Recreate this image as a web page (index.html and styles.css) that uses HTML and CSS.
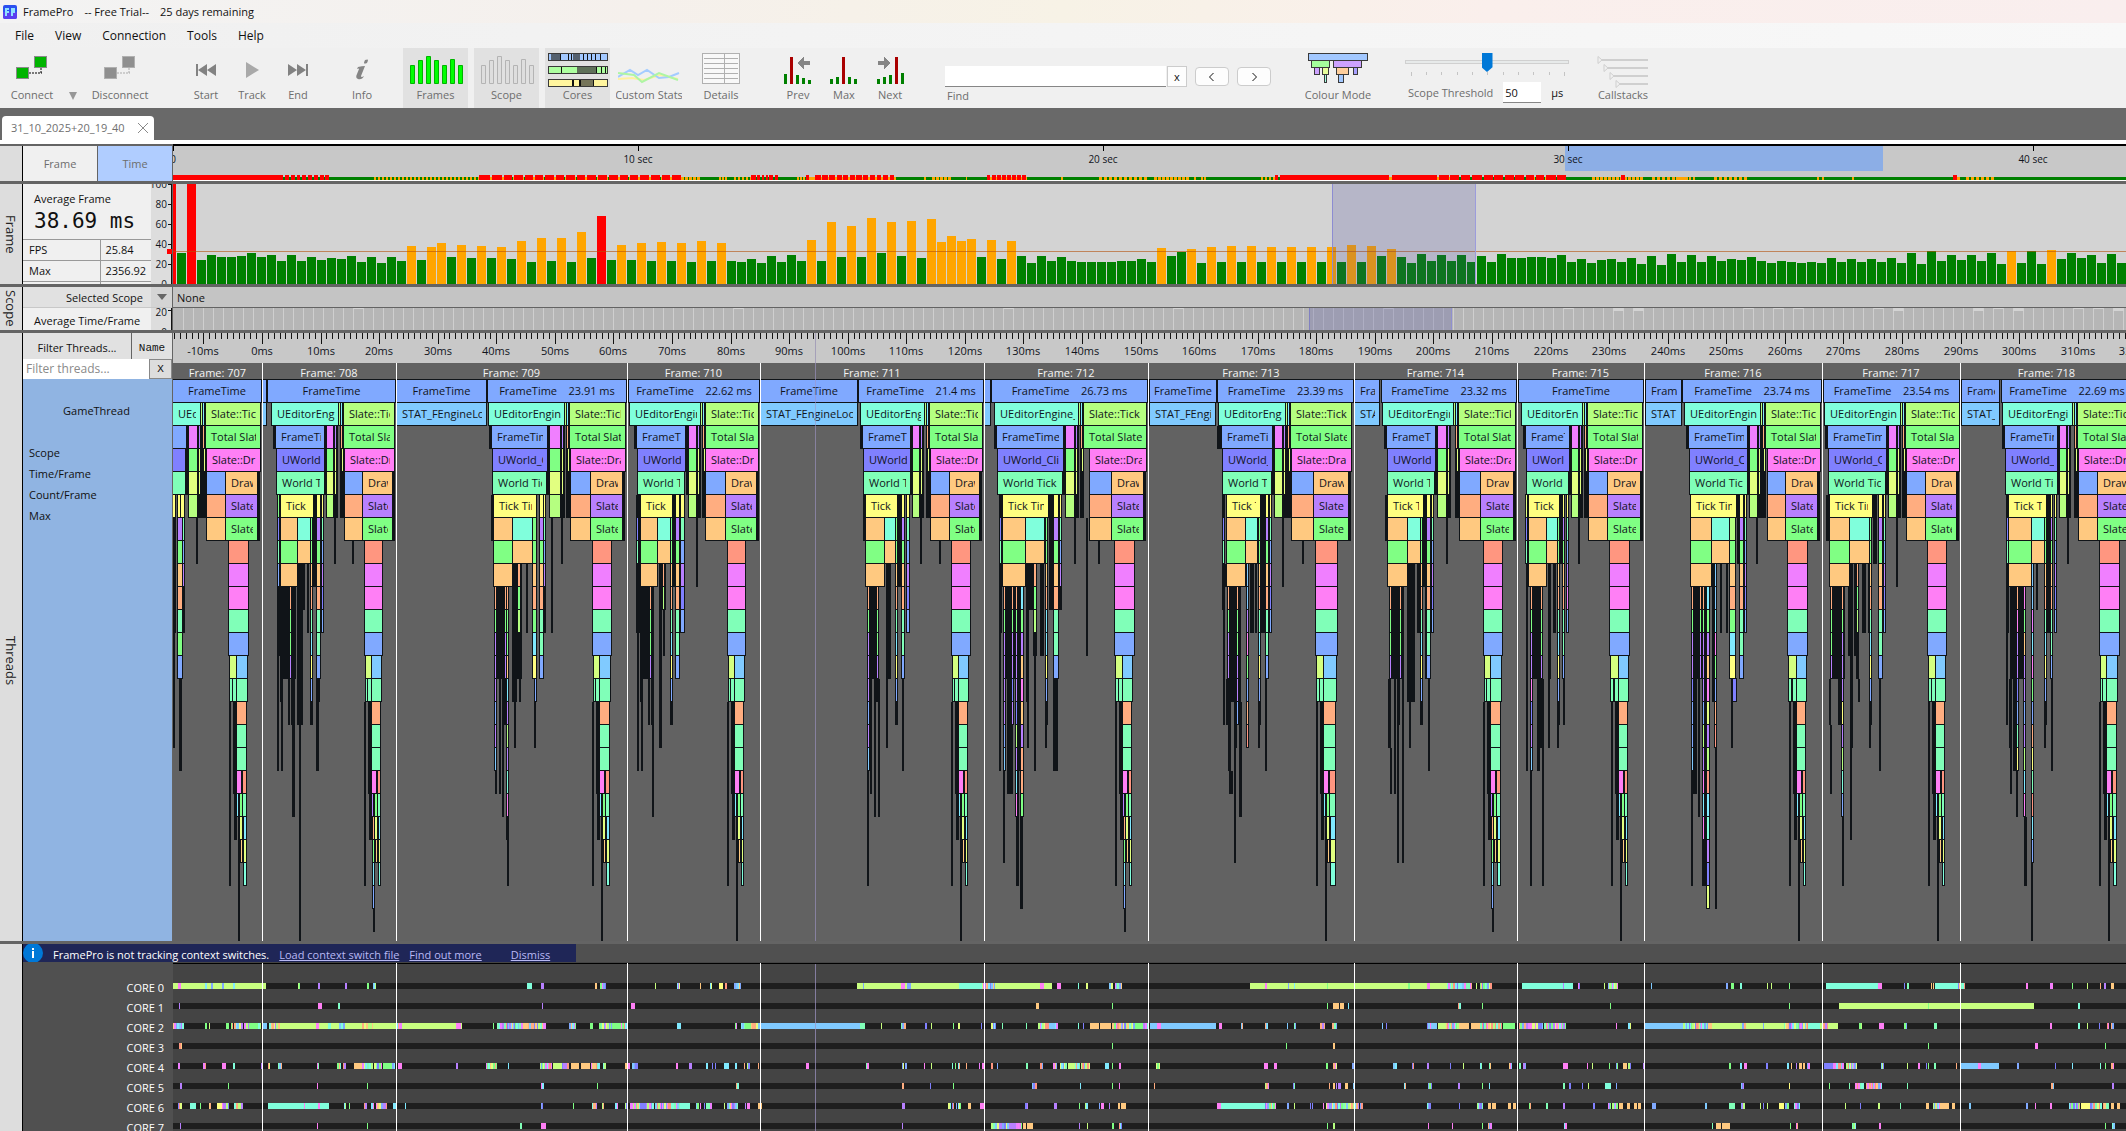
FILE: index.html
```html
<!DOCTYPE html>
<html lang="en">
<head>
<meta charset="utf-8">
<title>FramePro</title>
<link rel="stylesheet" href="styles.css">
</head>
<body>
<header class="titlebar">
  <svg class="app-icon" width="14" height="14" viewBox="0 0 14 14"><rect width="14" height="14" rx="2" fill="#2a50f0"/><path d="M0 7h14v5a2 2 0 0 1-2 2H2a2 2 0 0 1-2-2z" fill="#5a3ff0"/><path d="M2 11V3h4v2H4v1h2v2H4v3zM8 11V3h4v5h-2v3z" fill="#8fe0ff"/></svg>
  <span>FramePro</span><span>-- Free Trial--</span><span>25 days remaining</span>
</header>
<nav class="menubar">
  <button>File</button><button>View</button><button>Connection</button><button>Tools</button><button>Help</button>
</nav>
<div class="toolbar">
  <button class="tool w60"><svg width="32" height="32" viewBox="0 0 32 32"><path d="M13 17h13M25 12v6" stroke="#000" stroke-dasharray="2 1" fill="none"/><rect x=".5" y="11.500" width="12" height="11" fill="#00b400" stroke="#8a8a8a"/><rect x="18.500" y=".5" width="12" height="11" fill="#00b400" stroke="#8a8a8a"/></svg><span>Connect</span></button>
  <button class="drop" aria-label="Connect options"><svg width="10" height="10" viewBox="0 0 10 10"><path d="M1 1h8L5 9z" fill="#979797"/></svg></button>
  <button class="tool w72"><svg width="32" height="32" viewBox="0 0 32 32"><path d="M13 17h13M25 12v6" stroke="#aaa" stroke-dasharray="2 1" fill="none"/><rect x=".5" y="11.500" width="12" height="11" fill="#8f8f8f" stroke="#b0b0b0"/><rect x="18.500" y=".5" width="12" height="11" fill="#8f8f8f" stroke="#b0b0b0"/></svg><span>Disconnect</span></button>
  <button class="tool w46 gap-l"><svg width="22" height="32" viewBox="0 0 22 32"><path d="M1 8h2v12H1zM3 14l9-6v12zM12 14l9-6v12z" fill="#828282"/></svg><span>Start</span></button>
  <button class="tool w46"><svg width="22" height="32" viewBox="0 0 22 32"><path d="M5 6l13 8-13 8z" fill="#a9a9a9"/></svg><span>Track</span></button>
  <button class="tool w46"><svg width="22" height="32" viewBox="0 0 22 32"><path d="M1 8l9 6-9 6zM10 8l9 6-9 6zM19 8h2v12h-2z" fill="#828282"/></svg><span>End</span></button>
  <button class="tool w46 gap-m"><svg width="16" height="32" viewBox="0 0 16 32"><path d="M11 4q3-1 3 0t-1 3q-3 1-3 0t1-3zM4 11q4-1 7-1L7 20q0 2 3 0-2 4-6 3-3-1-1-5l2-5q0-1-2 0z" fill="#858585"/></svg><span>Info</span></button>
  <button class="tool w65 on gap-m"><svg width="54" height="32" viewBox="0 0 54 32"><g fill="#0f0" stroke="#00b400"><path d="M1.500 9.500h4v18h-4zM9.500 4.500h4v23h-4zM17.500.5h4v27h-4zM25.500 4.500h4v23h-4zM33.500 9.500h4v18h-4zM41.500 3.500h4v24h-4zM49.500 9.500h4v18h-4z"/></g></svg><span>Frames</span></button>
  <button class="tool w65 on gap-s"><svg width="54" height="32" viewBox="0 0 54 32"><g fill="#dedede" stroke="#b4b4b4"><path d="M1.500 9.500h4v18h-4zM9.500 4.500h4v23h-4zM17.500.5h4v27h-4zM25.500 4.500h4v23h-4zM33.500 9.500h4v18h-4zM41.500 3.500h4v24h-4zM49.500 9.500h4v18h-4z"/></g></svg><span>Scope</span></button>
  <button class="tool w65 on gap-s"><svg class="hi" width="60" height="34" viewBox="0 0 60 34" shape-rendering="crispEdges"><g stroke="#3a3a3a"><rect x=".5" y=".5" width="59" height="7" fill="#a2c8ff"/><rect x=".5" y="13.500" width="59" height="7" fill="#adffa0"/><rect x=".5" y="26.500" width="59" height="7" fill="#fff59e"/></g><path d="M3 1h9v6H3zM25 1h7v6h-7z" fill="#54606e"/><path d="M29 14h20v6H29z" fill="#5e7058"/><path d="M33 27h13v6H33z" fill="#76755a"/><path d="M12 1h1v6h-1zM20 1h1v6h-1zM23 1h1v6h-1zM35 1h1v6h-1zM39 1h1v6h-1zM43 1h1v6h-1zM47 1h1v6h-1zM52 1h1v6h-1zM13 14h1v6h-1zM48 14h1v6h-1zM53 14h1v6h-1zM57 14h1v6h-1zM24 27h2v6h-2zM31 27h2v6h-2zM45 27h1v6h-1z" fill="#111"/></svg><span>Cores</span></button>
  <button class="tool w66 gap-s"><svg width="62" height="32" viewBox="0 0 62 32"><g fill="none" stroke-width="2"><path d="M0 23l14-1 12 2 16-5 18 4" stroke="#fff0a0"/><path d="M0 21l12-7 8 5 9-5 12 8 10-1 10-4" stroke="#a4ccff"/><path d="M0 17l16 2 8 7 17-9 19 7" stroke="#aef5a4"/></g></svg><span>Custom Stats</span></button>
  <button class="tool w66 gap-s"><svg class="hi" width="38" height="32" viewBox="0 0 38 32" shape-rendering="crispEdges"><rect x=".5" y=".5" width="37" height="30" fill="#f8f8f8" stroke="#b0b0b0"/><path d="M22.500 1v30M2 5.500h34M2 10.500h34M2 15.500h34M2 20.500h34M2 25.500h34" stroke="#b0b0b0" fill="none"/></svg><span>Details</span></button>
  <button class="tool w46 gap-n"><svg width="30" height="32" viewBox="0 0 30 32" shape-rendering="crispEdges"><path d="M1 18h3v10H1zM13 19h3v9h-3zM19 22h3v6h-3zM25 24h3v4h-3z" fill="green"/><path d="M7 1h3v27H7z" fill="#a00"/><path d="M14 7l7-6v4h6v4h-6v4z" fill="#858585"/></svg><span>Prev</span></button>
  <button class="tool w46"><svg width="30" height="32" viewBox="0 0 30 32" shape-rendering="crispEdges"><path d="M1 23h3v5H1zM7 21h3v7H7zM19 21h3v7h-3zM25 23h3v5h-3z" fill="green"/><path d="M13 1h3v27h-3z" fill="#a00"/></svg><span>Max</span></button>
  <button class="tool w46"><svg width="30" height="32" viewBox="0 0 30 32" shape-rendering="crispEdges"><path d="M2 23h3v5H2zM8 21h3v7H8zM14 19h3v9h-3zM26 17h3v11h-3z" fill="green"/><path d="M20 1h3v27h-3z" fill="#a00"/><path d="M16 7L9 1v4H3v4h6v4z" fill="#858585"/></svg><span>Next</span></button>
  <div class="find">
    <div class="find-row"><input id="find" type="text"><button class="clear">x</button></div>
    <label for="find">Find</label>
  </div>
  <button class="step" aria-label="Previous match"><svg width="8" height="10" viewBox="0 0 8 10"><path d="M5.500 1l-4 4 4 4" fill="none" stroke="#111"/></svg></button>
  <button class="step" aria-label="Next match"><svg width="8" height="10" viewBox="0 0 8 10"><path d="M2.500 1l4 4-4 4" fill="none" stroke="#111"/></svg></button>
  <button class="tool w66 gap-x"><svg class="hi" width="60" height="32" viewBox="0 0 60 32" shape-rendering="crispEdges"><g stroke="#3a3a3a"><rect x=".5" y=".5" width="59" height="7" fill="#a2c8ff"/><rect x="3.500" y="7.500" width="18" height="7" fill="#a5ff9c"/><rect x="25.500" y="7.500" width="28" height="7" fill="#cda2ff"/><rect x="6.500" y="14.500" width="5" height="7" fill="#cda2ff"/><rect x="14.500" y="14.500" width="6" height="7" fill="#e8ff9c"/><rect x="28.500" y="14.500" width="12" height="7" fill="#ffcf9c"/><rect x="45.500" y="14.500" width="4" height="7" fill="#a8a0ff"/><rect x="16.500" y="21.500" width="2" height="8" fill="#a2ffe0"/><rect x="30.500" y="21.500" width="5" height="8" fill="#a2c8ff"/></g></svg><span>Colour Mode</span></button>
  <div class="threshold">
    <input class="range" type="range" min="0" max="100" value="50" aria-label="Scope threshold slider">
    <svg class="ticks" width="156" height="4" shape-rendering="crispEdges"><path d="M1 0v4M16 0v3M31 0v3M47 0v3M62 0v3M77 0v3M93 0v3M108 0v3M123 0v3M139 0v3M154 0v4" stroke="#c4c4c4"/></svg>
    <div class="th-row"><label for="th">Scope Threshold</label><input id="th" type="text" value="50"><span>µs</span></div>
  </div>
  <button class="tool w66 gap-n"><svg width="52" height="32" viewBox="0 0 52 32"><g fill="none" stroke="#cfcfcf"><path d="M1 .5L5 4 1 7.500zM7 8.500l4 3.500-4 3.500zM13 16.500l4 3.500-4 3.500zM19 24.500l4 3.500-4 3.500z"/><path d="M5 4h46M11 12h40M17 20h34M23 28h28" stroke-width="2"/></g></svg><span>Callstacks</span></button>
</div>
<div class="tabs"><div class="tab"><span>31_10_2025+20_19_40</span><button aria-label="Close tab"><svg width="10" height="10" viewBox="0 0 10 10"><path d="M0 0l10 10M10 0L0 10" stroke="#8a8a8a"/></svg></button></div></div>
<main class="panes">
  <section class="pane overview">
    <div class="rail"></div>
    <div class="side modes"><button>Frame</button><button class="sel">Time</button></div>
    <svg class="plot" id="overview" height="35"></svg>
  </section>
  <section class="pane frames">
    <div class="rail"><span>Frame</span></div>
    <div class="side split">
      <div class="stats">
        <p class="avg">Average Frame</p>
        <p class="big">38.69 ms</p>
        <table><tr><th>FPS</th><td>25.84</td></tr><tr><th>Max</th><td>2356.92</td></tr><tr><th></th><td></td></tr></table>
      </div>
      <svg class="scale" id="frame-scale" width="21" height="100"></svg>
    </div>
    <svg class="plot" id="frames" height="100"></svg>
  </section>
  <section class="pane scope">
    <div class="rail"><span>Scope</span></div>
    <div class="side">
      <div class="scope-sel"><span>Selected Scope</span><button aria-label="Choose scope"><svg width="10" height="6" viewBox="0 0 10 6"><path d="M0 0h10L5 6z" fill="#666"/></svg></button></div>
      <div class="scope-avg"><span>Average Time/Frame</span><svg class="scale" id="scope-scale" width="21" height="22"></svg></div>
    </div>
    <div class="scope-plot"><div class="scope-name">None</div><svg class="plot" id="scope" height="22"></svg></div>
  </section>
  <section class="pane threads">
    <div class="rail"><span>Threads</span></div>
    <div class="side thread-side">
      <div class="filter-head"><button>Filter Threads...</button><button class="name">Name</button></div>
      <div class="filter-row"><input type="text" placeholder="Filter threads..." aria-label="Filter threads"><button>X</button></div>
      <div class="thread-info"><h2>GameThread</h2><p>Scope</p><p>Time/Frame</p><p>Count/Frame</p><p>Max</p></div>
    </div>
    <div class="thread-plot"><svg class="plot" id="ruler" height="30"></svg><svg class="plot" id="flame" height="578"></svg></div>
  </section>
  <section class="pane cores">
    <div class="rail"></div>
    <div class="core-main">
      <div class="notice"><svg width="20" height="18" viewBox="0 0 20 18"><circle cx="10" cy="9" r="10" fill="#0078d7"/><path d="M9 4h2v2H9zM9 7h2v7H9z" fill="#fff"/></svg><span>FramePro is not tracking context switches.</span><a href="#load">Load context switch file</a><a href="#more">Find out more</a><a class="dismiss" href="#dismiss">Dismiss</a></div>
      <div class="core-body">
        <ul class="core-names"><li>CORE 0</li><li>CORE 1</li><li>CORE 2</li><li>CORE 3</li><li>CORE 4</li><li>CORE 5</li><li>CORE 6</li><li>CORE 7</li></ul>
        <svg class="plot" id="cores" height="180"></svg>
      </div>
    </div>
  </section>
</main>
<script src="app.js"></script>
</body>
</html>
```
FILE: styles.css
```css
* { box-sizing: border-box; }
body {
  margin: 0;
  height: 100vh;
  overflow: hidden;
  display: flex;
  flex-direction: column;
  font: 11px/16px "Open Sans", "Noto Sans", sans-serif;
  color: #111;
  background: #f0f0f0;
}
button { font: inherit; color: inherit; border: 0; padding: 0; background: none; }
p, h2, ul { margin: 0; padding: 0; font: inherit; list-style: none; }
svg { display: block; flex: none; }
svg text { font: 11px "Open Sans", "Noto Sans", sans-serif; fill: #10141c; }

.titlebar {
  display: flex;
  align-items: center;
  gap: 11px;
  height: 23px;
  padding-left: 3px;
  background: linear-gradient(90deg, #f3f3f3, #f5f0ec 30%, #f7f2e6 50%, #faefec 70%, #f9eeee);
}
.app-icon { margin-right: -5px; }
.menubar { display: flex; gap: 21px; height: 25px; padding-left: 15px; font-size: 12px; background: linear-gradient(90deg, #f0f0f0, #f8f8f8); }

.toolbar { display: flex; height: 60px; padding-left: 2px; color: #6d6d6d; }
.tool { display: flex; flex-direction: column; align-items: center; justify-content: space-between; height: 60px; padding: 5px 0 7px; white-space: nowrap; overflow: hidden; flex: none; }
.tool svg { margin-top: 3px; }
.tool svg.hi { margin-top: 0; }
.tool.on { background: #e1e1e1; }
.tool span { line-height: 13px; }
.w46 { width: 46px; } .w60 { width: 60px; } .w65 { width: 65px; } .w66 { width: 66px; } .w72 { width: 72px; }
.gap-s { margin-left: 6px; } .gap-m { margin-left: 18px; } .gap-n { margin-left: 21px; } .gap-l { margin-left: 27px; } .gap-x { margin-left: 34px; }
.drop { width: 22px; padding: 36px 6px 0; }
.find { width: 242px; margin-left: 32px; padding-top: 18px; }
.find-row { display: flex; gap: 1px; height: 21px; }
.find-row input { width: 221px; border: 0; border-bottom: 1px solid #868686; background: #fff; }
.clear { width: 20px; border: 1px solid #ccc; background: #fdfdfd; color: #111; }
.find label { display: block; padding: 1px 2px; }
.step { display: grid; place-items: center; width: 34px; height: 19px; margin: 19px 0 0 8px; border: 1px solid #ccc; border-radius: 4px; background: #fdfdfd; flex: none; }
.threshold { width: 164px; margin-left: 34px; padding-top: 4px; }
.range { display: block; width: 164px; height: 20px; margin: 0; appearance: none; background: none; }
.range::-webkit-slider-runnable-track { height: 4px; border: 1px solid #d0d0d0; background: #e7eaea; }
.range::-webkit-slider-thumb { appearance: none; width: 11px; height: 19px; margin-top: -8px; background: #0078d7; clip-path: polygon(0 0, 100% 0, 100% 75%, 50% 100%, 0 75%); }
.ticks { margin-left: 5px; }
.th-row { display: flex; align-items: center; gap: 10px; padding: 6px 0 0 3px; white-space: nowrap; }
.th-row input { width: 38px; height: 21px; padding: 0 2px; border: 0; border-bottom: 1px solid #868686; background: #fff; font: inherit; color: #111; }
.th-row span { color: #111; }

.tabs { height: 36px; padding: 8px 2px 0; background: #696969; border-bottom: 4px solid #fff; }
.tab { display: flex; align-items: center; justify-content: space-between; width: 152px; height: 24px; padding: 0 6px 0 9px; background: #fff; border-radius: 4px 4px 0 0; color: #707070; }

.panes { flex: 1; min-height: 0; display: flex; flex-direction: column; gap: 3px; background: #646464; padding-top: 2px; }
.pane { display: flex; min-width: 0; }
.rail { width: 22px; flex: none; background: #ddd; display: grid; place-items: center; }
.rail span { writing-mode: vertical-rl; font-size: 13px; color: #222; }
.threads .rail { padding-top: 48px; }
.side { width: 151px; flex: none; border-left: 1px solid #000; border-right: 1px solid #646464; background: #f0f0f0; }
.plot { flex: 1; min-width: 0; width: 100%; overflow: hidden; shape-rendering: crispEdges; }
.overview .plot { margin-top: -2px; height: 37px; }
.modes { display: flex; color: #6d6d6d; }
.modes button { flex: 1; }
.modes .sel { background: #b0cdff; border-left: 1px solid #646464; }

.split { display: flex; height: 100px; }
.stats { flex: 1; overflow: hidden; }
.scale { background: #ddd; }
svg .small { font-size: 10px; }
.avg { padding: 7px 0 0 11px; }
.big { padding: 2px 0 5px 11px; font: 21px/25px "DejaVu Sans Mono", monospace; }
.stats table { width: 100%; border-collapse: collapse; }
.stats th, .stats td { height: 21px; padding: 0 6px; border-top: 1px solid #999; font-weight: 400; text-align: left; }
.stats td { width: 51px; border-left: 1px solid #999; padding: 0 0 0 5px; }

.scope-sel { display: flex; height: 21px; background: #e1e1e1; border-bottom: 1px solid #c8c8c8; }
.scope-sel span { flex: 1; text-align: right; padding: 3px 8px 0 0; }
.scope-sel button { width: 21px; display: grid; place-items: center; background: #d4d4d4; }
.scope-avg { display: flex; height: 22px; overflow: hidden; }
.scope-avg span { flex: 1; padding: 5px 0 0 11px; white-space: nowrap; }
.scope-plot, .thread-plot { flex: 1; min-width: 0; }
.scope-name { height: 21px; padding: 3px 4px 0; background: #c4c4c4; border-bottom: 1px solid #646464; }

.thread-side { display: flex; flex-direction: column; background: #90b4e2; }
.filter-head { display: flex; height: 26px; background: #e1e1e1; }
.filter-head button { flex: 1; padding-top: 4px; }
.filter-head .name { flex: none; width: 41px; border-left: 1px solid #646464; font: 11px "Liberation Mono", monospace; }
.filter-row { display: flex; height: 20px; }
.filter-row input { flex: 1; min-width: 0; border: 0; padding: 0 3px; font: inherit; font-size: 12px; background: #fff; }
.filter-row input::placeholder { color: #8a8a8a; }
.filter-row button { width: 23px; border: 1px solid #888; background: #ddd; font: 11px "Liberation Mono", monospace; }
.thread-info { padding: 24px 8px 0 6px; line-height: 21px; }
.thread-info h2 { text-align: center; line-height: 16px; margin-bottom: 23px; }

.cores { flex: 1; min-height: 0; overflow: hidden; }
.core-main { flex: 1; min-width: 0; border-left: 1px solid #000; background: #505050; color: #fff; }
.notice { display: flex; align-items: center; width: 553px; height: 18px; background: #1f2657; white-space: nowrap; }
.notice span { margin: 4px 10px 0 10px; }
.notice a { color: #b9b9f5; margin: 4px 10px 0 0; }
.notice .dismiss { margin-left: 19px; }
.core-body { display: flex; }
.core-names { width: 150px; flex: none; padding: 16px 9px 0 0; text-align: right; line-height: 20px; }
#cores { background: #444; }
```
FILE: app.js
```js
const C = { r: '#ff9680', a: '#ffad80', o: '#ffc980', y: '#ffff80', Y: '#e2ff80', d: '#d4ff80', l: '#b5ff80', g: '#80ff84',
  t: '#80ffb8', c: '#80ffdc', i: '#80eaff', s: '#80caff', b: '#80a9ff', v: '#8080ff', p: '#b880ff', m: '#f07fff', k: '#ff7ff5' };
const DARK = '#101418';
const LEFT = 173;
const rect = (x, y, w, h, f) => `<rect x="${x}" y="${y}" width="${w}" height="${h}" fill="${f}"/>`;
const text = (x, y, s, extra = '') => `<text x="${x}" y="${y}" ${extra}>${s}</text>`;
const mid = 'text-anchor="middle"';
const put = (id, s, shift = LEFT) => { document.getElementById(id).innerHTML = `<g transform="translate(${-shift},0)">${s}</g>`; };
const span = s => s.trim().split(/\s+/).map(t => {
  const m = t.match(/^([A-Za-z]?)(\d+)(?:-(\d+))?$/);
  return { c: m[1], x: +m[2], e: m[3] ? +m[3] : +m[2] + 2 };
});
const FRAME_X = [262, 396, 627, 760, 984, 1148, 1354, 1517, 1644, 1822, 1960];

/* Session overview */
{
  let s = rect(LEFT, 0, 4000, 35, '#c8c8c8') + rect(LEFT, 0, 4000, 2, '#000') + rect(1565, 2, 318, 25, '#8caee6');
  s += rect(LEFT, 33, 4000, 3, 'green') + rect(LEFT, 36, 4000, 1, '#fff');
  const dash = (a, b, p, w, c, y, h) => { for (let x = a; x < b; x += p) s += rect(x, y, w, h, c); };
  [[374, 479, 4, 2], [485, 700, 4, 3], [719, 726, 3, 2], [734, 751, 4, 2], [797, 804, 3, 2], [808, 896, 4, 4], [924, 926, 4, 2], [932, 952, 4, 3], [966, 967, 4, 1], [990, 1026, 5, 2],
   [1061, 1063, 4, 2], [1099, 1145, 5, 3], [1154, 1188, 4, 3], [1194, 1196, 4, 2], [1201, 1207, 3, 2], [1261, 1274, 4, 2], [1389, 1392, 4, 3], [1437, 1560, 12, 2], [1592, 1644, 4, 3],
   [1652, 1675, 5, 3], [1676, 1688, 4, 4], [1689, 1696, 4, 2], [1714, 1745, 5, 3], [1817, 1819, 4, 2], [1822, 1824, 4, 2], [1852, 1854, 4, 2], [1957, 1961, 4, 3], [1966, 1995, 5, 3]]
    .forEach(([a, b, p, w]) => dash(a, b, p, w, 'orange', 33, 3));
  span('173-283 285-289 291-295 297-300 302-306 308-312 314-318 320-324 325-329 479-490 492-502 504-512 514-523 525-533 535-543 545-554 556-564 566-575 577-585 587-596 598-607 609-618 620-628 630-638 640-649 651-660 662-670 672-681 751-756 757-760 762-764 766-768 769-773 775-778 806-809 815-821 822-828 829-835 837-842 843-848 850-855 856-862 863-868 870-875 877-881 883-888 890-894 987-990 992-996 997-1001 1002-1006 1007-1011 1012-1016 1017-1021 1022-1026 1275-1278 1280-1389 1392-1437 1439-1449 1450-1459 1461-1470 1472-1482 1484-1493 1494-1503 1505-1514 1515-1524 1526-1534 1536-1544 1546-1556 1557-1566 1621-1625 1953-1957')
    .forEach(q => { s += rect(q.x, 31, q.e - q.x, 5, 'red'); });
  [[173, '0'], [638, '10 sec'], [1103, '20 sec'], [1568, '30 sec'], [2033, '40 sec']].forEach(([x, l]) => { s += rect(x, 2, 1, 5, '#000') + text(x, 19, l, mid + ' class="small"'); });
  put('overview', s);
}

/* Frame graph: heights in ms, o = over budget, r = spike */
{
  const H = '31 r100 24 29 27 27 28 31 27 29 23 29 23 27 24 26 25 28 22 27 21 27 23 o38 24 o37 o41 27 o39 26 o38 26 o37 25 o43 22 o46 23 o46 22 o52 26 r68 24 o39 24 o41 23 o42 23 o41 22 o43 23 o41 23 22 25 21 28 22 29 23 o44 23 o62 27 o58 27 o66 31 o62 28 o63 26 o65 o42 o48 o43 o45 27 o44 25 o43 28 21 28 23 27 23 22 22 22 22 23 23 25 22 o36 28 32 o35 21 o37 22 o38 22 o38 22 o37 22 o37 22 o37 22 o37 22 o39 22 o38 28 o35 27 21 30 23 29 23 29 22 28 22 30 26 26 27 27 26 29 22 25 21 24 25 22 26 20 28 19 30 22 29 22 28 23 25 24 27 23 21 23 22 21 22 21 26 22 25 22 25 22 26 21 31 20 33 23 29 24 29 23 31 20 o33 21 33 20 o34 25 31 26 29 21 30 21'.split(' ');
  let s = rect(LEFT, 0, 4000, 100, '#d3d3d3') + rect(173, 0, 3, 100, 'red');
  H.forEach((h, k) => {
    const n = +h.replace(/\D/g, '');
    s += rect(177 + 10 * k, 100 - n, 9, n, h[0] === 'o' ? 'orange' : h[0] === 'r' ? 'red' : 'green');
  });
  s += rect(LEFT, 67, 4000, 1, 'rgba(180,80,10,.6)') + rect(1332, 0, 144, 100, 'rgba(70,70,160,.2)') + rect(1332, 0, 1, 100, '#8c8cd2') + rect(1475, 0, 1, 100, '#9c9cdc');
  put('frames', s);
  let a = rect(20, 0, 1, 100, '#111') + rect(16, 65, 5, 5, 'red');
  [100, 80, 60, 40, 20, 0].forEach(v => { a += rect(17, 100 - v, 3, 1, '#111') + text(16, 104 - v, v, 'text-anchor="end" class="small"'); });
  put('frame-scale', a, 0);
}

/* Scope graph */
{
  let s = rect(LEFT, 0, 4000, 22, '#b6b6b6');
  for (let x = 183; x < 2400; x += 10) s += rect(x, 0, 1, 22, '#cfcfcf');
  [353, 733, 1003, 1173, 1383, 1563, 1743, 1773, 1793, 1873, 1993, 2073, 2093].forEach(x => { s += rect(x, 0, 11, 1, '#d3d3d3'); });
  [1613, 1633, 1893, 1973, 2013, 2113].forEach(x => { s += rect(x, 0, 11, 3, '#d3d3d3'); });
  s += rect(1309, 0, 143, 22, 'rgba(100,100,170,.3)') + rect(1309, 0, 1, 22, '#8080c0') + rect(1451, 0, 1, 22, '#9090d0');
  put('scope', s);
  put('scope-scale', rect(20, 0, 1, 22, '#111') + rect(17, 2, 3, 1, '#111') + text(16, 8, '20', 'text-anchor="end" class="small"') + text(16, 28, '0', 'text-anchor="end" class="small"'), 0);
}

/* Time ruler */
{
  let s = rect(LEFT, 0, 4000, 30, '#c8c8c8');
  for (let t = -15; t < 400; t++) {
    const x = Math.round(262 + 5.857 * t);
    s += rect(x, 0, 1, t % 10 ? 6 : 11, '#111');
    if (t % 10 === 0) s += text(x, 22, t + 'ms', mid);
  }
  put('ruler', s + rect(815, 0, 1, 30, 'rgba(130,120,170,.5)'));
}

/* Call tree of the game thread */
const top0 = 17;
const rowY = r => top0 + 23 * r;
const pen = document.createElement('canvas').getContext('2d');
pen.font = '11px "Open Sans"';
/* keep only the characters that start inside the bar */
const fit = (s, w) => { while (s.length > 1 && pen.measureText(s.slice(0, -1)).width > w - 1) s = s.slice(0, -1); return s; };
const label = (x, r, w, s, center) => w < 14 ? '' : `<svg x="${x + 4}" y="${rowY(r)}" width="${w - 8}" height="22">${center ? text((w - 8) / 2, 15, s, mid) : text(1, 15, fit(s, w - 9))}</svg>`;
const cell = (x, r, w, c, s, center) => rect(x - 1, rowY(r) - 1, w + 2, 24, DARK) + rect(x, rowY(r), w, 22, C[c]) + (s ? label(x, r, w, s, center) : '');

/* head: [x, end, time]; stat: bars of the idle call; g: editor tick, frame, tick, split, ends; m: middle; s: slate; st: draw stack
   dark: x,width,first row,end row; thin: x,width,first row,colours */
const FR = [
  { n: 707, head: [[173, 261]], g: null, m: [189, 8], s: [206, 260, 207, 226, 257], st: [229, 19, 237, 10],
    dark: '173,3,5,11 177,8,5,11 177,4,11,13 179,3,13,17 173,2,11,16 196,2,6,8', thin: '178,4,6,pgoatgb 173,2,5,y 178,2,5,y 181,3,5,y 183,1,6,tbp' },
  { n: 708, head: [[263, 266], [268, 395]], stat: [263, 266], g: [272, 339, 276, 325, 281, 313, 298, 310], m: [327, 6], s: [344, 394, 345, 363, 392], st: [365, 17, 372, 9], deep: 1,
    dark: '277,3,5,12 277,2,12,17 280,16,9,13 280,3,13,14 281,2,14,17 288,2,13,15 291,4,13,15 292,3,15,19 297,6,8,15 299,2,15,25 303,2,8,10 307,2,8,11 310,3,5,15 313,3,5,9 316,5,5,13 316,4,13,14 316,3,14,17 321,3,5,11 334,2,6,8 352,2,7,8',
    thin: '278,1,5,gvtb 290,1,9,aggp 311,1,5,vggoatiyb 317,3,5,ypgoattb 322,1,5,ytbpvb' },
  { n: 709, head: [[397, 486], [488, 626, '23.91']], stat: [397, 486], g: [489, 566, 492, 547, 494, 536, 513, 532], m: [550, 10], s: [570, 625, 571, 591, 622], st: [593, 18, 600, 10],
    dark: '491,2,5,7 494,14,9,13 494,3,13,17 495,2,17,18 499,2,13,18 502,2,13,19 503,3,13,15 506,3,9,20 507,2,20,22 512,5,8,14 514,2,14,16 517,5,8,13 519,2,13,14 526,2,8,11 532,5,5,13 534,2,13,16 539,4,5,13 543,3,5,11 551,2,6,11 561,2,6,8',
    thin: '495,1,9,agpppbps 505,1,9,agpp 507,1,9,aggoiplpck 518,2,8,agl 533,3,6,ggoagiy 535,1,13,b 540,3,5,ypgoattb 544,1,5,ytbp' },
  { n: 710, head: [[629, 759, '22.62']], g: [630, 701, 637, 685, 641, 672, 658, 670], m: [689, 7], s: [706, 758, 706, 726, 756], st: [728, 17, 735, 9],
    dark: '634,3,2,3 636,4,5,11 637,2,11,17 640,14,9,13 640,2,13,14 641,2,13,17 648,2,13,15 651,3,13,15 652,2,15,19 659,3,8,16 662,4,8,10 663,2,10,12 670,3,5,15 673,3,5,9 675,5,5,13 679,6,5,11 696,2,6,9',
    thin: '637,1,6,vt 650,1,9,aggp 663,1,8,al 671,1,5,vggoatiyb 676,3,5,ypgoattb 681,3,5,ytbpvb' },
  { n: 711, head: [[761, 857], [859, 983, '21.4']], stat: [761, 857], g: [861, 925, 863, 911, 866, 897, 885, 895], m: [913, 6], s: [930, 982, 931, 950, 979], st: [952, 18, 959, 9],
    dark: '863,2,5,7 867,12,9,13 867,3,13,17 867,2,17,22 870,2,13,18 874,2,13,19 876,3,13,14 878,2,13,19 886,3,8,13 886,2,13,16 889,2,8,13 895,3,5,15 898,3,5,9 901,4,5,13 902,2,13,17 906,4,5,11 920,2,6,8 939,2,6,8',
    thin: '868,1,9,agpppbps 877,1,9,aggp 896,1,5,vggoatiyb 902,2,5,ypgoattb 907,2,5,ytbpvb' },
  { n: 712, head: [[985, 990], [992, 1147, '26.73']], stat: [985, 990], g: [995, 1079, 997, 1063, 1003, 1048, 1026, 1044], m: [1066, 8], s: [1084, 1146, 1090, 1112, 1143], st: [1115, 19, 1123, 9], deep: 1,
    dark: '999,3,5,11 999,2,11,17 1003,19,9,13 1003,3,13,17 1003,2,17,21 1007,3,13,18 1010,3,13,18 1015,4,13,19 1016,3,19,22 1019,4,13,17 1020,3,17,23 1026,3,8,14 1027,2,14,16 1029,6,8,10 1033,4,8,12 1034,2,12,17 1040,4,8,12 1045,3,5,15 1045,2,15,16 1049,4,5,10 1053,6,5,13 1053,5,13,17 1059,3,5,10 1074,2,6,8 1086,2,6,12 1098,2,6,8',
    thin: '1000,1,6,vt 1004,1,9,agppppbs 1012,1,9,agppvp 1016,1,9,agpppvlpik 1021,2,9,igpokopaag 1034,2,8,agl 1046,1,5,vggoaiiyb 1054,4,5,ypgoattb 1060,1,5,ytbp' },
  { n: 713, head: [[1150, 1216], [1218, 1353, '23.39']], stat: [1150, 1215], g: [1219, 1286, 1222, 1272, 1227, 1260, 1246, 1257], m: [1275, 7], s: [1291, 1351, 1292, 1314, 1348], st: [1316, 21, 1324, 12],
    dark: '1217,3,2,3 1222,3,5,10 1222,7,8,9 1223,2,10,15 1228,13,9,14 1226,3,13,15 1228,3,14,17 1229,4,17,18 1234,3,14,16 1234,2,16,21 1239,3,14,19 1246,3,8,16 1250,4,8,11 1255,2,8,11 1258,3,5,15 1258,2,15,16 1261,4,5,11 1265,4,5,13 1265,2,13,17 1269,3,5,11 1282,2,6,9 1302,2,6,8',
    thin: '1223,1,6,vt 1228,1,9,agpp 1237,1,9,aggppb 1247,1,8,sspkgbar 1259,1,5,vggoatiyb 1266,2,5,ypgoattb 1270,1,5,ytbpvb' },
  { n: 714, head: [[1355, 1379], [1382, 1516, '23.32']], stat: [1355, 1379], g: [1383, 1454, 1387, 1435, 1388, 1423, 1408, 1420], m: [1438, 8], s: [1459, 1515, 1460, 1481, 1513], st: [1484, 18, 1491, 10], deep: 1,
    dark: '1385,2,5,7 1389,15,9,13 1388,3,13,16 1390,2,16,18 1394,2,13,18 1397,3,13,15 1397,2,15,21 1402,2,13,21 1407,6,8,14 1409,2,14,16 1413,2,8,14 1417,3,8,11 1420,3,5,15 1423,4,5,9 1425,5,5,13 1428,2,13,17 1431,3,5,11 1446,2,6,8',
    thin: '1390,1,9,aggp 1400,1,9,aggp 1421,1,5,vggoatiyb 1427,3,5,ypgoattb 1432,1,5,ytbpvb' },
  { n: 715, head: [[1519, 1643]], g: [1522, 1583, 1526, 1569, 1529, 1559, 1547, 1557], m: [1572, 6], s: [1588, 1642, 1589, 1608, 1640], st: [1610, 19, 1619, 9],
    dark: '1525,3,5,8 1526,2,8,17 1531,12,9,13 1530,3,13,17 1530,2,17,22 1537,3,13,17 1539,3,13,16 1542,2,13,22 1548,3,8,13 1548,2,13,16 1553,3,8,11 1557,3,5,15 1557,2,15,16 1560,3,5,8 1562,3,5,13 1563,2,13,15 1566,3,5,11 1578,2,6,8',
    thin: '1526,1,5,Yvt 1531,1,9,agppkvps 1541,1,9,aggp 1558,1,5,vggoatiyb 1563,1,5,ypgoattb 1567,1,5,ytbpmb' },
  { n: 716, head: [[1646, 1681], [1683, 1821, '23.74']], stat: [1646, 1681], g: [1685, 1761, 1689, 1748, 1691, 1736, 1712, 1729], m: [1750, 7], s: [1766, 1820, 1768, 1786, 1817], st: [1788, 19, 1797, 9],
    dark: '1692,17,9,13 1691,3,13,18 1691,2,18,22 1694,3,13,18 1698,2,13,19 1702,4,13,22 1706,4,13,23 1712,3,8,14 1714,3,8,16 1715,2,16,23 1720,2,8,11 1726,2,8,11 1729,7,5,13 1732,5,13,14 1731,2,13,16 1737,3,5,8 1739,5,5,13 1744,3,5,11 1756,2,6,8',
    thin: '1692,1,9,agppvbbs 1700,1,9,agpp 1703,1,9,agpppblpkik 1707,2,9,igpokYplricpvY 1715,1,8,ssikgbar 1730,5,6,lgoagiy 1733,3,13,v 1740,3,5,ypgoattb 1745,1,5,ytbpvb' },
  { n: 717, head: [[1824, 1959, '23.54']], g: [1825, 1901, 1828, 1886, 1830, 1872, 1850, 1869], m: [1889, 7], s: [1906, 1959, 1907, 1926, 1956], st: [1928, 18, 1936, 9],
    dark: '1826,3,5,7 1830,15,9,13 1829,2,13,15 1830,2,15,18 1841,3,13,19 1842,2,19,22 1838,3,13,15 1848,5,8,12 1850,3,12,16 1850,2,16,20 1854,2,8,12 1856,3,8,13 1858,2,13,14 1862,4,8,11 1868,2,8,11 1869,3,5,15 1869,2,15,16 1873,4,5,8 1878,5,5,13 1879,2,13,17 1883,3,5,11 1896,2,6,9',
    thin: '1831,1,9,aggp 1842,1,9,agpppyplcb 1857,1,8,agl 1870,1,5,vggoatiyb 1879,3,5,ypgoattb 1884,1,5,ytbpvb' },
  { n: 718, head: [[1962, 1999], [2002, 2132, '22.69']], stat: [1962, 1999], g: [2003, 2073, 2005, 2058, 2009, 2046, 2032, 2044], m: [2060, 6], s: [2078, 2134, 2079, 2098, 2132], st: [2100, 19, 2107, 10],
    dark: '2006,3,5,11 2006,2,11,15 2010,16,9,13 2009,3,13,16 2010,2,16,18 2013,3,13,17 2016,3,13,17 2016,2,17,19 2023,3,13,19 2024,3,19,22 2031,3,8,21 2031,2,21,25 2036,2,8,10 2044,3,5,15 2044,2,15,16 2047,4,5,11 2050,3,5,13 2051,2,13,17 2054,3,5,11 2067,2,6,8',
    thin: '2007,1,6,vt 2017,1,9,akppvbty 2024,1,9,kgoppbplik 2032,1,8,ssmikgbaytrib 2045,1,5,vggoatiyb 2051,1,5,ypgoattb 2055,1,5,ytbpvb' }
];
{
  let s = rect(LEFT, 0, 4000, 578, '#626262') + rect(LEFT, 16, 4000, 1, DARK);
  FR.forEach(f => {
    f.dark.split(' ').forEach(q => { const [x, w, a, b] = q.split(',').map(Number); s += rect(x, rowY(a), w, 23 * (b - a), DARK); });
    f.thin.split(' ').forEach(q => { const [x, w, r, cs] = q.split(','); [...cs].forEach((c, i) => { s += cell(+x, +r + i, +w, c); }); });
    f.head.forEach(([x, e, ms]) => { s += cell(x, 0, e - x, 'b', 'FrameTime' + (ms ? '\u00a0\u00a0\u00a0\u00a0' + ms + ' ms' : ''), e - x > 64); });
    if (f.stat) s += cell(f.stat[0], 1, f.stat[1] - f.stat[0], 's', 'STAT_FEngineLoop');
    if (f.g) {
      const [ux, ue, fx, fe, tx, te, cx, ce] = f.g;
      s += cell(ux, 1, ue - ux, 'c', 'UEditorEngine_Tick') + rect(fx - 3, rowY(2), 3, 23, DARK) + cell(fx, 2, fe - fx, 'b', 'FrameTime') + cell(fx + 1, 3, fe - fx - 1, 'v', 'UWorld_Client')
        + cell(fx + 1, 4, fe - fx - 2, 't', 'World Tick Time') + cell(tx, 5, te - tx, 'y', 'Tick Time')
        + cell(tx, 6, cx - tx - 1, 'o') + cell(cx, 6, ce - cx, 'c') + cell(tx, 7, cx - tx - 1, 'g') + cell(cx, 7, ce - cx, 'o') + cell(tx, 8, cx - tx - 1, 'o');
    } else {
      s += cell(173, 1, 27, 'c', 'UEditor') + cell(173, 2, 13, 'b') + cell(173, 3, 12, 'v') + cell(173, 4, 12, 't');
    }
    const [mx, mw] = f.m, [sx, se, dx, cut, de] = f.s;
    s += rect(mx - 3, rowY(2), 3, 69, DARK);
    'mgYl'.split('').forEach((c, i) => { s += cell(mx, 2 + i, mw, c); });
    s += rect(mx + mw + 1, rowY(2), 4, 92, DARK) + rect(sx - 6, rowY(1), 6, 23, DARK) + rect(sx - 4, rowY(2), 4, 92, DARK);
    'pYY'.split('').forEach((c, i) => { s += cell(mx + mw + 2, 2 + i, 1, c); });
    s += rect(sx - 5, rowY(1), 1, 22, C.l) + rect(sx - 3, rowY(1), 1, 22, C.i) + rect(sx - 3, rowY(2), 1, 22, C.a) + rect(sx - 2, rowY(3), 1, 22, C.Y);
    s += cell(sx, 1, se - sx, 'l', 'Slate::Tick (Time)') + cell(sx, 2, se - sx, 'g', 'Total Slate Tick') + cell(dx, 3, se - dx, 'k', 'Slate::Draw Window');
    s += rect(de + 1, rowY(4), 2, 69, DARK);
    [['b', 'o', 'Draw Win'], ['a', 'p', 'Slate Draw'], ['o', 'g', 'Slate Draw']].forEach(([a, b, t], i) => { s += cell(dx, 4 + i, cut - dx - 1, a) + cell(cut, 4 + i, de - cut, b, t); });

    const [x, w, X, W] = f.st;
    s += rect(X - 8, rowY(14), 2, 184, DARK) + rect(X - 4, rowY(14), 4, 92, DARK) + rect(X - 3, rowY(18), 3, 46, DARK);
    s += f.deep ? cell(X + 1, 19, 1, 'a') + cell(X + 1, 20, 1, 'g') + cell(X + 1, 21, 1, 'i') + cell(X + 1, 22, 1, 'b') + rect(X + 1, rowY(23), 2, 23, DARK) : rect(X + 1, rowY(19), 2, 138, DARK);
    'rmktb'.split('').forEach((c, i) => { s += cell(x, 7 + i, w, c); });
    s += cell(x + 1, 12, X - x - 2, 'd') + cell(X, 12, W, 's') + cell(x + 1, 13, 2, 't') + cell(X - 4, 13, 3, 't') + cell(X, 13, W, 't') + cell(X, 14, W - 1, 'a') + cell(X, 15, W - 1, 't') + cell(X, 16, W - 1, 't');
    s += cell(X, 17, 4, 'k') + cell(X + 6, 17, W - 7, 'r') + cell(X, 18, 1, f.deep ? 'p' : 'i') + cell(X + 3, 18, 2, 'g') + cell(X + 6, 18, W - 7, 't');
    s += cell(X + 3, 19, 2, 'Y') + cell(X + 7, 19, W - 8, 'i') + cell(X + 4, 20, 1, 'o') + cell(X + 7, 20, W - 8, 'Y') + cell(X + 7, 21, W - 8, 'c');
  });
  const edges = [LEFT, ...FRAME_X, 2133];
  FR.forEach((f, i) => { s += text((edges[i] + edges[i + 1]) / 2, 14, 'Frame: ' + f.n, mid + ' style="fill:#f4f4f4"'); });
  FRAME_X.forEach(x => { s += rect(x, 0, 1, 578, '#fff'); });
  put('flame', s + rect(815, 0, 1, 578, 'rgba(160,150,200,.6)'));
}

/* Core activity: colour code + range; no code means mixed threads */
const CORES = [
  'l173-266 k178-181 i205 b211 b222 i233 298 p318 p345 g367 373-376 c527-532 p541-544 o595-597 600-606 l655-656 677-680 700-701 710-712 y719-723 725-727 734-741 l857-1052 b863-864 k901-905 b907-911 c959-982 983-994 b994-995 k1040-1044 k1057-1061 c1078-1079 1086-1088 1109-1113 1115-1122 l1250-1447 k1265-1267 b1288-1289 i1294-1295 g1327-1328 g1408-1410 k1427-1430 1447-1472 l1476-1477 1480-1492 c1522-1573 p1563-1564 1578-1580 l1604-1605 1608-1618 s1651-1652 1726 g1731-1734 1740-1742 l1767-1768 l1771-1772 g1789-1790 c1826-1878 k1878-1882 v1904-1905 t1907-1909 o1931-1932 o1933-1934 c1935-1958 1958-1965 2026 2050-2053 g2072-2073 l2087-2088 a2100-2101 2104-2106 o2111-2114',
  'p179-180 k318-322 338 p542-543 k631-635 o1036-1039 g1112-1113 g1327-1328 o1333-1339 o1340-1344 i1348-1349 1458-1461 g1482-1483 g1610-1611 g1789-1790 l1839-2034 g1928-1929 c2078-2080',
  '173-184 g205 l209-210 g226-229 231 234-243 244-261 g249-258 s262-267 269-280 l280-462 k316-319 c328-331 339-345 362-373 396-402 k456-461 g493-494 497-546 o523-528 569-576 g590-593 599-627 g612-621 677-681 735 741-758 g745-751 s758-860 t860-865 l881-882 901-906 v925-927 l931-932 g953-954 958-960 v981-982 991-996 t1002-1003 t1026-1027 1038-1058 c1078-1079 v1083-1084 o1090-1099 o1100-1111 1112-1149 g1135-1143 s1150-1216 k1157-1161 k1219-1222 1241-1243 1265-1268 s1287-1288 1294-1296 1320-1325 1332-1337 s1382-1383 v1386-1387 1427-1437 l1438-1446 1446-1459 o1459-1469 o1471-1480 1480-1502 g1503-1515 1519-1543 1544-1566 k1616-1617 1628-1631 s1644-1683 1683-1708 o1708-1712 l1712-1838 1740-1746 b1763-1764 1784-1808 c1808-1820 1820-1828 1859-1862 k1879-1884 1904-1907 t1934-1937 k2050-2052 c2078-2080 l2087-2088 v2099-2100 2107 2111-2114',
  '179-182 g1112-1113 g1286-1287 o1333-1335 g1928-1929 k2035-2038 g2105-2106',
  '178-180 203-206 k222-226 233-235 p261-262 268-270 278-282 317-319 337-341 343-346 o354-362 362-373 374-382 g383-392 392-395 k398-402 p456-458 486-497 i508-509 540-552 l553-562 562-569 o571-579 o581-590 591-600 603-606 625-630 632-638 k676-678 p689-692 706-708 v712-713 v715-716 i724-729 735-737 a744-745 747-750 a758-759 k806-809 866-869 902-904 b905-907 k924-925 l931-932 952-953 955-956 958-960 a966-967 979-980 k982-984 991-993 b997-998 t1026-1028 1040-1043 1053-1057 1060-1067 l1068-1075 1075-1080 1081-1090 i1105-1109 g1112-1113 1119-1121 1156-1160 k1264-1268 k1274-1277 g1326-1328 1333-1337 b1352-1354 1393-1397 1412-1414 p1427-1429 v1450-1451 l1463-1464 1480-1482 1489-1491 1509-1512 t1519-1521 1523-1526 k1563-1568 k1587-1588 l1592-1593 g1609-1610 1616-1618 o1623-1627 1628-1631 p1643-1644 g1729-1731 1740-1742 k1744-1747 1766-1768 1787-1789 o1791-1792 p1796-1797 o1799-1802 o1803-1805 1807-1810 v1824-1833 1833-1844 1846-1857 1881-1884 l1907-1908 k1918-1920 v1926-1927 g1928-1929 t1934-1936 a1956-1957 s1961-1999 k1978-1981 b2017-2019 v2055-2056 i2072-2073 c2100-2101 g2105-2106 2111-2114',
  'p180-182 g228-229 k317-318 g367-368 541-544 g597-598 736-739 902-904 v930-931 g953-954 1032-1037 i1080-1081 g1112-1113 k1119-1120 a1154-1155 1265-1269 1293-1295 a1329-1330 o1333-1335 p1336-1337 p1338-1341 o1345-1348 1353-1355 1404-1406 1428-1432 1458-1460 g1482-1483 1489-1490 1563-1565 v1569-1571 v1582-1583 l1588-1589 c1605-1611 b1616-1617 1741-1744 y1789-1790 g1829-1830 t1849-1850 k1855-1857 1857-1864 1866-1882 t1907-1908 2051-2054 p2112-2114',
  '178-182 c190-196 g200-201 209-211 y217-222 222-229 234-243 c268-329 k304-305 k318-320 344-346 g349-350 364-367 371-374 376-387 393-396 i405-406 541-543 g573-574 592-597 602-604 615-618 625-627 630-640 v640-646 646-654 655-680 c680-690 696-699 k700-701 v704-705 706-712 l724-725 727-738 745-746 k747-750 o758-762 p902-905 948-951 952-954 b956-957 958-961 o968-971 k980-984 1025-1028 p1054-1057 g1079-1080 1085-1088 b1099-1100 k1101-1104 p1109-1110 o1118-1120 o1121-1126 k1217-1221 c1221-1265 1265-1276 b1287-1289 l1294-1295 v1310-1311 v1312-1313 k1323-1324 1326-1359 1360-1363 1427-1431 v1459-1460 1477-1483 o1488-1491 o1492-1496 o1508-1511 o1513-1516 1529-1531 t1546-1548 p1563-1565 v1593-1595 1608-1611 1612-1618 o1619-1623 o1627-1630 o1634-1637 o1638-1641 b1652-1656 1705-1707 t1729-1735 1741-1745 l1760-1761 v1763-1764 l1767-1768 y1779-1784 1785-1789 1794-1800 l1845-1846 v1860-1861 l1878-1880 t1900-1901 o1926-1929 1933-1940 o1940-1949 o1952-1955 1969-1971 2026-2028 k2035-2036 k2050-2052 2069-2080 y2081-2090 2090-2102 2103-2109 o2111-2114 o2117-2120',
  'p180-181 k317-318 g367-368 520-522 k541-546 p902-903 991-1009 p1009-1016 1016-1022 o1023-1026 o1027-1033 1079-1080 l1087-1088 g1112-1114 1119-1122 g1327-1328 1333-1335 k1428-1429 k1452-1453 g1482-1483 1488-1492 1564-1567 t1712-1713 o1716-1721 o1722-1730 g1790-1791 1796-1798 1852-1856 k1879-1881 g2105-2106 2112-2115'
];
{
  const mix = 'sbptogYkicvlarm';
  let seed = 7;
  const rnd = n => { seed = (seed * 1103515245 + 12345) % 2147483648; return Math.floor(seed / 65536) % n; };
  let s = rect(LEFT, 0, 4000, 180, '#444') + rect(LEFT, 1, 4000, 1, '#000');
  CORES.forEach((line, i) => {
    const y = 21 + 20 * i;
    s += rect(LEFT, y, 4000, 6, '#1e1e1e');
    span(line).forEach(q => {
      if (q.c) { s += rect(q.x, y, q.e - q.x, 6, q.c === 'l' ? '#c8ff80' : C[q.c]); return; }
      for (let x = q.x; x < q.e;) { const w = Math.min(q.e - x, 1 + rnd(2)); s += rect(x, y, w, 6, C[mix[rnd(mix.length)]]); x += w; }
    });
  });
  FRAME_X.forEach(x => { s += rect(x, 1, 1, 180, '#fff'); });
  put('cores', s + rect(815, 2, 1, 180, 'rgba(160,150,200,.7)'));
}
```
